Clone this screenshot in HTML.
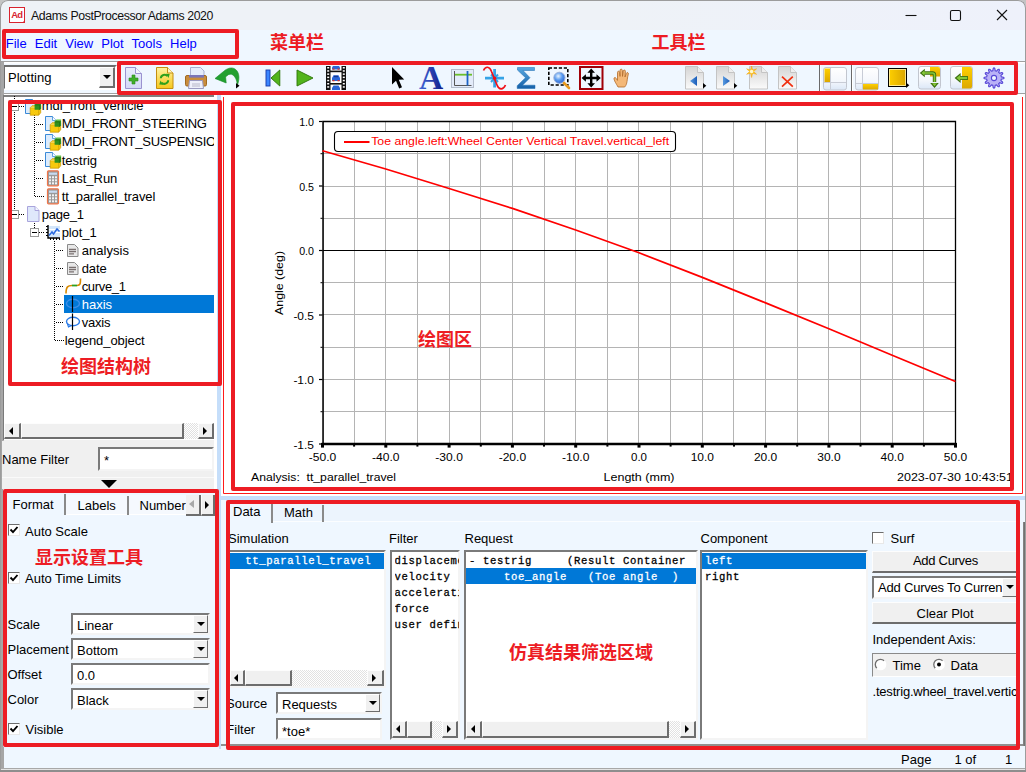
<!DOCTYPE html>
<html><head><meta charset="utf-8"><title>Adams PostProcessor Adams 2020</title>
<style>
*{box-sizing:border-box;margin:0;padding:0}
html,body{width:1026px;height:772px;overflow:hidden;background:#eff7ff}
body{position:relative;font-family:"Liberation Sans","Noto Sans CJK SC",sans-serif;font-size:13px;color:#000}
.a{position:absolute}
.t{position:absolute;white-space:pre;line-height:1}
.rb{position:absolute;border:4px solid #ed1c24;border-radius:2px}
.cn{position:absolute;white-space:pre;line-height:1;color:#ed1c24;font-weight:bold;font-size:18px;font-family:"Liberation Sans","Noto Sans CJK SC",sans-serif}
.sunk{position:absolute;background:#fff;border:2px solid;border-color:#7a7a7a #f4f4f4 #f4f4f4 #7a7a7a}
.btn{position:absolute;background:#f0f0f0;border:2px solid;border-color:#fdfdfd #6d6d6d #6d6d6d #fdfdfd}
.mono{font-family:"Liberation Mono",monospace;font-weight:normal;font-size:10.6px;letter-spacing:0.64px;-webkit-text-stroke:0.28px currentColor}
.dd{position:absolute;background:#f0f0f0;border:1px solid;border-color:#fff #6d6d6d #6d6d6d #fff}
.dd:after{content:"";position:absolute;left:50%;top:50%;margin:-2px 0 0 -4px;border:4px solid transparent;border-top:4px solid #000;border-bottom:0}
.sbl:after,.sbr:after{content:"";position:absolute;top:50%;left:50%;border:4px solid transparent}
.sbl:after{border-right:4px solid #000;border-left:0;margin:-4px 0 0 -3px}
.sbr:after{border-left:4px solid #000;border-right:0;margin:-4px 0 0 -3px}
.chk{position:absolute;width:12px;height:12px;background:#fff;border:1px solid;border-color:#6d6d6d #e8e8e8 #e8e8e8 #6d6d6d}
</style></head><body>
<!-- title bar -->
<div class="a" style="left:0;top:0;width:1026px;height:31px;background:linear-gradient(90deg,#eef2f7 60%,#eef1fb)"></div>
<div class="a" style="left:9px;top:7px;width:16px;height:16px;border:1px solid #d8232f;background:#fff"></div>
<div class="t" style="left:11.2px;top:10.4px;font-size:9.4px;font-weight:bold;color:#d8232f;letter-spacing:-0.8px">Ad</div>
<div class="t" id="ttl" style="left:31px;top:10px;font-size:12.3px;color:#111;letter-spacing:-0.38px">Adams PostProcessor Adams 2020</div>
<svg class="a" style="left:900px;top:5px" width="115" height="22" viewBox="0 0 115 22"><g fill="none" stroke="#111" stroke-width="1.1">
<path d="M5.5 10.5h11"/><rect x="50.5" y="5.5" width="10" height="10" rx="1.5"/><path d="M97 5l10 10M107 5l-10 10"/></g></svg>
<div class="a" style="left:22px;top:20px;width:0;height:0;border-left:3px solid transparent;border-bottom:3px solid #d8232f"></div>
<!-- menu bar -->
<div class="a" style="left:0;top:30px;width:1026px;height:30px;background:#eff7ff"></div>
<div class="t" id="menu" style="left:5.7px;top:37px;font-size:13px;color:#0000ff;word-spacing:4.5px">File Edit View Plot Tools Help</div>
<div class="a" style="left:0;top:61px;width:1026px;height:1px;background:#a0a0a0"></div>
<div class="a" style="left:0;top:62px;width:1026px;height:1px;background:#fff"></div><div class="a" style="left:0;top:63px;width:1026px;height:1px;background:#f8fbff"></div>
<!-- toolbar -->
<div class="a" style="left:2px;top:93px;width:220px;height:1px;background:#a0a0a0"></div><div class="a" style="left:2px;top:94px;width:220px;height:1px;background:#fff"></div>
<div class="sunk" style="left:3px;top:65px;width:114px;height:25px;border-color:#6d6d6d #fff #fff #6d6d6d"></div>
<div class="t" style="left:8px;top:71px;font-size:13px">Plotting</div>
<div class="dd" style="left:99px;top:67px;width:16px;height:21px;border-width:1px 2px 2px 1px"></div>
<svg class="a" style="left:0;top:56px" width="1026" height="44" viewBox="0 56 1026 44">
<defs>
<linearGradient id="gPg" x1="0" y1="0" x2="0" y2="1"><stop offset="0" stop-color="#d4d4d4"/><stop offset="1" stop-color="#fbfbfb"/></linearGradient>
<linearGradient id="gLv" x1="0" y1="0" x2="0" y2="1"><stop offset="0" stop-color="#e8eefc"/><stop offset="1" stop-color="#d4d8f6"/></linearGradient>
<linearGradient id="gYl" x1="0" y1="0" x2="0" y2="1"><stop offset="0" stop-color="#fff2a0"/><stop offset="1" stop-color="#f6c81c"/></linearGradient>
<linearGradient id="gYh" x1="0" y1="0" x2="1" y2="0"><stop offset="0" stop-color="#ffd000"/><stop offset="1" stop-color="#d8a400"/></linearGradient>
<linearGradient id="gYv" x1="0" y1="0" x2="0" y2="1"><stop offset="0" stop-color="#ffd000"/><stop offset="1" stop-color="#dca800"/></linearGradient>
<linearGradient id="gWh" x1="0" y1="0" x2="0" y2="1"><stop offset="0" stop-color="#ffffff"/><stop offset="0.6" stop-color="#f4f7fc"/><stop offset="1" stop-color="#dbe7f7"/></linearGradient>
<linearGradient id="gBl" x1="0" y1="0" x2="1" y2="0"><stop offset="0" stop-color="#5a9be0"/><stop offset="1" stop-color="#1b5cb8"/></linearGradient>
<linearGradient id="gSg" x1="0" y1="0" x2="0" y2="1"><stop offset="0" stop-color="#58a8e0"/><stop offset="1" stop-color="#1560a8"/></linearGradient>
<linearGradient id="gA" x1="0" y1="0" x2="1" y2="0"><stop offset="0" stop-color="#4468d8"/><stop offset="1" stop-color="#101c88"/></linearGradient>
<radialGradient id="gMg" cx="0.4" cy="0.35" r="0.7"><stop offset="0" stop-color="#e8f4ff"/><stop offset="0.5" stop-color="#5a9cf0"/><stop offset="1" stop-color="#2a60d0"/></radialGradient>
</defs>
<!-- 1 new page -->
<path d="M125.5 67.5h10l6 6v15h-16z" fill="url(#gLv)" stroke="#9a92d0"/><path d="M135.5 67.5v6h6" fill="#f4f6ff" stroke="#9a92d0"/>
<path d="M132 75h3v3h3v3h-3v3h-3v-3h-3v-3h3z" fill="#3fae2a" stroke="#2a8a18" stroke-width=".6"/>
<!-- 2 refresh -->
<path d="M156.5 67.5h11l5.500 5.500v15.500h-16.500z" fill="url(#gYl)" stroke="#c48e10"/><path d="M167.500 67.500v5.500h5.500" fill="#fff6c0" stroke="#c48e10"/>
<g fill="none" stroke="#2fa01c" stroke-width="2"><path d="M160.800 78.300a3.800 3.800 0 0 1 6.600-2.300"/><path d="M168.200 80.300a3.800 3.800 0 0 1-6.600 2.300"/></g>
<path d="M165.800 73.800l3.900 .3-1.200 3.900z" fill="#2fa01c"/><path d="M163.200 84.800l-3.900-.3 1.200-3.900z" fill="#2fa01c"/>
<!-- 3 printer -->
<path d="M190.500 67.500h10l3.500 3.500v6h-13.500z" fill="#e4ecfc" stroke="#a8b0d0"/>
<rect x="185.500" y="75.500" width="21" height="10.500" rx="1.500" fill="#c98d3c" stroke="#a06a20"/>
<rect x="189" y="75" width="15" height="2.600" fill="#7a74b8"/>
<path d="M189.500 80.500h13l1 8h-15z" fill="#eef0fa" stroke="#9a9ac0"/><path d="M192 84h8M192 86h8" stroke="#b8b8c8" stroke-width="1"/>
<!-- 4 undo -->
<path d="M215 78.500L223.500 71.500C227 68.300 231 67.200 234 68.500C238.600 70.500 240.600 77 237.300 85.500C237 80 235 75.600 231.500 74.300C229.500 73.700 227.500 74.800 225.600 77L226.200 83Z" fill="#23a030" stroke="#148a28" stroke-width=".6"/>
<path d="M236 83v5.500l3.500-2.750z" fill="#000"/>
<!-- 5 first -->
<rect x="266" y="70" width="4" height="16" fill="#3b86ff" stroke="#1638a8" stroke-width=".9"/>
<path d="M271 78l8.800-8v16z" fill="#52b41c" stroke="#2c7408" stroke-width=".9"/>
<!-- 6 play -->
<path d="M297 70l16 8-16 8z" fill="#52b41c" stroke="#2c7408" stroke-width=".9"/>
<!-- 7 film -->
<rect x="326" y="66" width="20" height="24" fill="#fff"/>
<rect x="326" y="66" width="4.500" height="24" fill="#111"/><rect x="341.500" y="66" width="4.500" height="24" fill="#111"/>
<g fill="#fff"><rect x="327.200" y="67" width="2" height="1.500"/><rect x="327.200" y="70.200" width="2" height="1.500"/><rect x="327.200" y="73.400" width="2" height="1.500"/><rect x="327.200" y="76.600" width="2" height="1.500"/><rect x="327.200" y="79.800" width="2" height="1.500"/><rect x="327.200" y="83" width="2" height="1.500"/><rect x="327.200" y="86.200" width="2" height="1.500"/>
<rect x="342.800" y="67" width="2" height="1.500"/><rect x="342.800" y="70.200" width="2" height="1.500"/><rect x="342.800" y="73.400" width="2" height="1.500"/><rect x="342.800" y="76.600" width="2" height="1.500"/><rect x="342.800" y="79.800" width="2" height="1.500"/><rect x="342.800" y="83" width="2" height="1.500"/><rect x="342.800" y="86.200" width="2" height="1.500"/></g>
<rect x="330" y="70.600" width="12" height="1.600" fill="#111"/><rect x="330" y="83" width="12" height="1.600" fill="#111"/>
<path d="M332 81v-3l1.500-2.800h5l1.500 2.800v3z" fill="#2a66d8"/><rect x="334" y="75.800" width="4" height="1.400" fill="#163a90"/><rect x="332.500" y="80" width="2" height="1.300" fill="#e03020"/><rect x="337.500" y="80" width="2" height="1.300" fill="#e03020"/>
<path d="M332 69.500v-2l1-1.500h6l1 1.500v2z" fill="#2a66d8"/><rect x="332.500" y="68.500" width="2" height="1.200" fill="#e03020"/><rect x="337.500" y="68.500" width="2" height="1.200" fill="#e03020"/>
<path d="M332 90v-2l1.500-2.600h5l1.500 2.600v2z" fill="#2a66d8"/>
<!-- 8 cursor -->
<path d="M392 67v17.500l4-3.700 3.200 7.700 2.800-1.200-3.200-7.500 5.400-.3z" fill="#000"/>
<!-- 9 A -->
<text x="431" y="89.400" font-family="Liberation Serif,serif" font-weight="bold" font-size="33.500" text-anchor="middle" fill="url(#gA)">A</text>
<!-- 10 chart -->
<rect x="451.500" y="69.500" width="22" height="18" fill="#e3ebfa" stroke="#b4bccb"/>
<path d="M454.500 71v14.500h17" fill="none" stroke="#555" stroke-width="1"/>
<path d="M455 74.700h17" stroke="#6cbf2a" stroke-width="1.800"/><path d="M467.500 71v14.500" stroke="#1b62c4" stroke-width="1.800"/>
<!-- 11 curve cross -->
<path d="M485 78.200h19M494.600 69v18.500" stroke="#36a3e6" stroke-width="2.800"/>
<path d="M491 74.500l7 7.500M498 74.500l-7 7.500" stroke="#36a3e6" stroke-width="2"/>
<path d="M483.500 70.500c2-4.500 6-4.500 8 1l5.500 13.500c2 5 6 5.500 8.500 0" fill="none" stroke="#f01018" stroke-width="1.700"/>
<circle cx="494.600" cy="78.200" r="1.700" fill="#f01018"/>
<!-- 12 sigma -->
<path d="M517.500 67.500h17v3h-11.500l7 7.200-7.500 7.500h12.500v3.300h-17.800v-2.800l8.300-8-8-7.600z" fill="url(#gSg)" stroke="#1a6ab0" stroke-width=".5"/>
<!-- 13 zoom box -->
<rect x="548.800" y="68" width="19" height="17" fill="none" stroke="#000" stroke-width="1.600" stroke-dasharray="3.200 1.800"/>
<path d="M563 82l6 6" stroke="#e89a20" stroke-width="2.600" stroke-linecap="round"/>
<circle cx="559.400" cy="77.800" r="5.600" fill="url(#gMg)" stroke="#9ab0d8" stroke-width="1"/>
<!-- 14 fit -->
<rect x="580" y="67" width="22.500" height="22" fill="none" stroke="#a00008" stroke-width="2"/>
<path d="M591.200 71v14M584 78h14.500" stroke="#000" stroke-width="2.400"/>
<path d="M591.200 68.400l3.800 4.300h-7.600zM591.200 87.600l3.800-4.300h-7.600zM581.600 78l4.300-3.800v7.600zM600.800 78l-4.300-3.800v7.600z" fill="#000"/>
<!-- 15 hand -->
<path d="M618 87c-1.500-3-3.500-5.500-4-8-.3-1.600 1.300-2 2.200-.6l1.300 2v-8c0-1.600 2-1.600 2.200 0l.3 4v-6c0-1.700 2.200-1.700 2.400 0l.1 6 .7-5.300c.3-1.600 2.300-1.300 2.200.3l-.4 5.600 1.300-3.600c.6-1.500 2.400-.9 2 .7-1 4-1 6.500-1.600 9-.4 1.800-1.200 2.900-2 3.900z" fill="#f4b878" stroke="#b06a28" stroke-width=".8"/>
<!-- 16 prev page -->
<path d="M685.500 66.500h12l6 6v16.500h-18z" fill="url(#gPg)" stroke="#c4c4c4"/><path d="M697.500 66.500v6h6" fill="#eee" stroke="#c4c4c4"/>
<path d="M690 81l7-5v10z" fill="url(#gBl)"/><path d="M703 83v5.500l3.300-2.750z" fill="#000"/>
<!-- 17 next page -->
<path d="M716.500 66.500h12l6 6v16.500h-18z" fill="url(#gPg)" stroke="#c4c4c4"/><path d="M728.500 66.500v6h6" fill="#eee" stroke="#c4c4c4"/>
<path d="M730 81l-7-5v10z" fill="url(#gBl)"/><path d="M734 83v5.500l3.300-2.750z" fill="#000"/>
<!-- 18 new page star -->
<path d="M749.500 66.500h12l6 6v16.500h-18z" fill="url(#gPg)" stroke="#c4c4c4"/><path d="M761.500 66.500v6h6" fill="#eee" stroke="#c4c4c4"/>
<path d="M751.600 66l1 4 4-1.200-3 2.800 3 2.700-4-1.100-1 4.300-1-4.300-4 1.100 3-2.700-3-2.800 4 1.200z" fill="#ffc820" stroke="#f0a010" stroke-width=".5"/><circle cx="751.600" cy="71.500" r="1.800" fill="#fff8d0"/>
<!-- 19 delete page -->
<path d="M778.500 66.500h12l6 6v16.500h-18z" fill="url(#gPg)" stroke="#c4c4c4"/><path d="M790.500 66.500v6h6" fill="#eee" stroke="#c4c4c4"/>
<path d="M782 76.600l10.800 10M792.800 76.600l-10.800 10" stroke="#f03010" stroke-width="1.700"/>
<!-- separators -->
<path d="M819.500 65v26M851.500 65v26" stroke="#6a6a6a" stroke-width="1"/><path d="M820.500 65v26M852.500 65v26" stroke="#fff" stroke-width="1"/>
<!-- 20 layout1 -->
<rect x="823.500" y="67.500" width="23" height="22.500" rx="2.500" fill="url(#gWh)" stroke="#c2c6cf"/>
<rect x="824.500" y="68.500" width="5.500" height="13.500" fill="url(#gYv)"/>
<path d="M824 82.500h22M830.500 68v21.500" stroke="#c8ccd6" stroke-width="1"/>
<!-- 21 layout2 -->
<rect x="855.500" y="67.500" width="23" height="22.500" rx="2.500" fill="url(#gWh)" stroke="#c2c6cf"/>
<rect x="863" y="84" width="15" height="5.500" fill="url(#gYv)"/>
<path d="M856 83.500h22M862.500 68v21.500" stroke="#c8ccd6" stroke-width="1"/>
<!-- 22 yellow square -->
<rect x="888.500" y="68.500" width="18" height="18" fill="url(#gYh)" stroke="#000"/><rect x="889.500" y="69.500" width="16" height="16" fill="none" stroke="#fff3b0" stroke-width=".8"/>
<path d="M906 82.500v5.500l3.300-2.750z" fill="#000"/>
<!-- 23 swap -->
<rect x="918.500" y="66.500" width="22" height="22.500" rx="2.500" fill="url(#gWh)" stroke="#c2c6cf"/>
<path d="M930 67h8a2 2 0 0 1 2 2v7.500h-10z" fill="url(#gYv)"/>
<path d="M924 73h8.500q2 0 2 2v7" fill="none" stroke="#3c6e10" stroke-width="3.400"/>
<path d="M919.800 73l5-4.300v8.600zM934.500 88l-4.300-5h8.600z" fill="#3c6e10"/>
<path d="M924 73h8.500q2 0 2 2v7" fill="none" stroke="#86c93a" stroke-width="1.600"/>
<path d="M921.500 73l3-2.500v5zM934.500 86.200l-2.500-3h5z" fill="#86c93a"/>
<!-- 24 left arrow -->
<rect x="950.500" y="66.500" width="22" height="22.500" rx="2.500" fill="url(#gWh)" stroke="#c2c6cf"/>
<path d="M962 67h8a2 2 0 0 1 2 2v17.500a2 2 0 0 1-2 2h-8z" fill="url(#gYv)"/>
<path d="M960 78h8" stroke="#3c6e10" stroke-width="3.800"/><path d="M954.600 78l6-5v10z" fill="#3c6e10"/>
<path d="M960 78h7.200" stroke="#86c93a" stroke-width="2"/><path d="M956.400 78l3.800-3.100v6.200z" fill="#86c93a"/>
<!-- 25 gear -->
<g transform="translate(994 78)" fill="#b9b2f7" stroke="#5546d6" stroke-width="1.100">
<path fill-rule="evenodd" d="M7.31 -1.16L9.36 -0.84Q10.80 0.00 9.36 0.84L7.31 1.16L6.91 2.65L8.53 3.96Q9.35 5.40 7.69 5.41L5.75 4.66L4.66 5.75L5.41 7.69Q5.40 9.35 3.96 8.53L2.65 6.91L1.16 7.31L0.84 9.36Q0.00 10.80 -0.84 9.36L-1.16 7.31L-2.65 6.91L-3.96 8.53Q-5.40 9.35 -5.41 7.69L-4.66 5.75L-5.75 4.66L-7.69 5.41Q-9.35 5.40 -8.53 3.96L-6.91 2.65L-7.31 1.16L-9.36 0.84Q-10.80 0.00 -9.36 -0.84L-7.31 -1.16L-6.91 -2.65L-8.53 -3.96Q-9.35 -5.40 -7.69 -5.41L-5.75 -4.66L-4.66 -5.75L-5.41 -7.69Q-5.40 -9.35 -3.96 -8.53L-2.65 -6.91L-1.16 -7.31L-0.84 -9.36Q-0.00 -10.80 0.84 -9.36L1.16 -7.31L2.65 -6.91L3.96 -8.53Q5.40 -9.35 5.41 -7.69L4.66 -5.75L5.75 -4.66L7.69 -5.41Q9.35 -5.40 8.53 -3.96L6.91 -2.65ZM2.6 0A2.6 2.6 0 1 0 -2.6 0A2.6 2.6 0 1 0 2.6 0Z"/>
</g>
</svg>
<!-- left edge strip -->
<div class="a" style="left:0;top:62px;width:4px;height:710px;background:#a6a6a6"></div>
<div class="a" style="left:0;top:74px;width:1px;height:14px;background:#5a3aa0"></div>
<div class="a" style="left:0;top:130px;width:1px;height:30px;background:#6a8ac8"></div>
<div class="a" style="left:0;top:228px;width:1px;height:26px;background:#5a3ad0"></div>
<div class="a" style="left:0;top:330px;width:1px;height:60px;background:#303030"></div>
<!-- tree view -->
<div class="a" style="left:3px;top:95px;width:212px;height:346px;background:#fff;border:1px solid;border-top-width:2px;border-color:#808080 #fff #f0f0f0 #7a7a7a"></div>
<svg class="a" style="left:4px;top:96px" width="210" height="327" viewBox="4 96 210 327">
<g stroke="#000" stroke-width="1" stroke-dasharray="1 1" fill="none">
<path d="M14.5 96V214"/>
<path d="M19 106.500H24"/>
<path d="M34.500 111V196.500H44"/>
<path d="M36 124.5H44"/>
<path d="M36 142.5H44"/>
<path d="M36 160.5H44"/>
<path d="M36 178.5H44"/>
<path d="M19 214.500H24"/>
<path d="M34.500 223V228"/>
<path d="M39 232.500H44"/>
<path d="M54.500 241V340.500H64"/>
<path d="M56 250.5H64"/>
<path d="M56 268.5H64"/>
<path d="M56 286.5H64"/>
<path d="M56 304.5H64"/>
<path d="M56 322.5H64"/>
</g>
<rect x="10.5" y="102.5" width="8" height="8" fill="#fff" stroke="#9a9a9a"/><path d="M12.0 106.5h5" stroke="#000"/>
<rect x="10.5" y="210.5" width="8" height="8" fill="#fff" stroke="#9a9a9a"/><path d="M12.0 214.5h5" stroke="#000"/>
<rect x="30.5" y="228.5" width="8" height="8" fill="#fff" stroke="#9a9a9a"/><path d="M32.0 232.5h5" stroke="#000"/>
<path d="M25.5 99.5h7l4 4v10h-11z" fill="#dcecfd" stroke="#3b8ad8"/><path d="M32.5 99.5v4h4" fill="#f6faff" stroke="#3b8ad8" stroke-width=".8"/><path d="M30.2 107.7l2-2h8.500v7l-2 2.500h-8.500z" fill="#f7c90e" stroke="#c79500" stroke-width=".7"/><path d="M30.2 107.7h8.500v7.500" fill="none" stroke="#c79500" stroke-width=".6"/><path d="M30.6 107.2h8.300l1.800-1.800" fill="none" stroke="#ffe680" stroke-width=".9"/><path d="M34.6 104.7l1.500-1.500h5v5l-1.500 1.500h-5z" fill="#2f8f1e"/><path d="M34.6 104.9h5v5" fill="none" stroke="#1d6a12" stroke-width=".7"/><path d="M35.0 104.2l1.300-1.300h4.800" fill="none" stroke="#6fcf4a" stroke-width=".9"/>
<path d="M45.5 116.5h7l4 4v10h-11z" fill="#dcecfd" stroke="#3b8ad8"/><path d="M52.5 116.5v4h4" fill="#f6faff" stroke="#3b8ad8" stroke-width=".8"/><path d="M50.2 124.7l2-2h8.500v7l-2 2.500h-8.500z" fill="#f7c90e" stroke="#c79500" stroke-width=".7"/><path d="M50.2 124.7h8.500v7.500" fill="none" stroke="#c79500" stroke-width=".6"/><path d="M50.6 124.2h8.300l1.800-1.800" fill="none" stroke="#ffe680" stroke-width=".9"/><path d="M54.6 121.7l1.500-1.500h5v5l-1.500 1.500h-5z" fill="#2f8f1e"/><path d="M54.6 121.9h5v5" fill="none" stroke="#1d6a12" stroke-width=".7"/><path d="M55.0 121.2l1.300-1.300h4.800" fill="none" stroke="#6fcf4a" stroke-width=".9"/>
<path d="M45.5 134.5h7l4 4v10h-11z" fill="#dcecfd" stroke="#3b8ad8"/><path d="M52.5 134.5v4h4" fill="#f6faff" stroke="#3b8ad8" stroke-width=".8"/><path d="M50.2 142.7l2-2h8.500v7l-2 2.500h-8.500z" fill="#f7c90e" stroke="#c79500" stroke-width=".7"/><path d="M50.2 142.7h8.500v7.500" fill="none" stroke="#c79500" stroke-width=".6"/><path d="M50.6 142.2h8.300l1.800-1.800" fill="none" stroke="#ffe680" stroke-width=".9"/><path d="M54.6 139.7l1.500-1.500h5v5l-1.500 1.500h-5z" fill="#2f8f1e"/><path d="M54.6 139.9h5v5" fill="none" stroke="#1d6a12" stroke-width=".7"/><path d="M55.0 139.2l1.300-1.300h4.800" fill="none" stroke="#6fcf4a" stroke-width=".9"/>
<path d="M45.5 152.5h7l4 4v10h-11z" fill="#dcecfd" stroke="#3b8ad8"/><path d="M52.5 152.5v4h4" fill="#f6faff" stroke="#3b8ad8" stroke-width=".8"/><path d="M50.2 160.7l2-2h8.500v7l-2 2.500h-8.500z" fill="#f7c90e" stroke="#c79500" stroke-width=".7"/><path d="M50.2 160.7h8.500v7.500" fill="none" stroke="#c79500" stroke-width=".6"/><path d="M50.6 160.2h8.300l1.800-1.800" fill="none" stroke="#ffe680" stroke-width=".9"/><path d="M54.6 157.7l1.500-1.500h5v5l-1.500 1.500h-5z" fill="#2f8f1e"/><path d="M54.6 157.9h5v5" fill="none" stroke="#1d6a12" stroke-width=".7"/><path d="M55.0 157.2l1.300-1.300h4.800" fill="none" stroke="#6fcf4a" stroke-width=".9"/>
<rect x="47.5" y="170.8" width="11" height="15" rx="1" fill="#9a9a9a" stroke="#f0764a" stroke-width="1.2"/><rect x="49.0" y="172.6" width="8" height="2.200" fill="#c8daf0"/><rect x="49.0" y="176.3" width="2" height="2" fill="#f4f4f4"/><rect x="52.0" y="176.3" width="2" height="2" fill="#f4f4f4"/><rect x="55.0" y="176.3" width="2" height="2" fill="#f4f4f4"/><rect x="49.0" y="179.3" width="2" height="2" fill="#f4f4f4"/><rect x="52.0" y="179.3" width="2" height="2" fill="#f4f4f4"/><rect x="55.0" y="179.3" width="2" height="2" fill="#f4f4f4"/><rect x="49.0" y="182.3" width="2" height="2" fill="#f4f4f4"/><rect x="52.0" y="182.3" width="2" height="2" fill="#f4f4f4"/><rect x="55.0" y="182.3" width="2" height="2" fill="#f4f4f4"/>
<rect x="47.5" y="188.8" width="11" height="15" rx="1" fill="#9a9a9a" stroke="#f0764a" stroke-width="1.2"/><rect x="49.0" y="190.6" width="8" height="2.200" fill="#c8daf0"/><rect x="49.0" y="194.3" width="2" height="2" fill="#f4f4f4"/><rect x="52.0" y="194.3" width="2" height="2" fill="#f4f4f4"/><rect x="55.0" y="194.3" width="2" height="2" fill="#f4f4f4"/><rect x="49.0" y="197.3" width="2" height="2" fill="#f4f4f4"/><rect x="52.0" y="197.3" width="2" height="2" fill="#f4f4f4"/><rect x="55.0" y="197.3" width="2" height="2" fill="#f4f4f4"/><rect x="49.0" y="200.3" width="2" height="2" fill="#f4f4f4"/><rect x="52.0" y="200.3" width="2" height="2" fill="#f4f4f4"/><rect x="55.0" y="200.3" width="2" height="2" fill="#f4f4f4"/>
<path d="M27.500 206.500h7.500l4 4v11h-11.500z" fill="#dfe8fb" stroke="#a9a4dc"/><path d="M35 206.500v4h4" fill="#f4f6ff" stroke="#a9a4dc"/>
<rect x="48" y="226" width="12" height="11" fill="#d4e6fa"/><path d="M48 229.500h12M48 232.500h12" stroke="#fff" stroke-width="1"/>
<path d="M48 225V238H60" fill="none" stroke="#000" stroke-width="1.400"/><path d="M46 226.500h2M46 229.500h2M46 232.500h2M46 235.500h2M50.500 238v2M53.500 238v2M56.500 238v2M59.500 238v2" stroke="#000" stroke-width="1"/>
<path d="M49 235.500l3-3.500 1.500 2 3.500-5 2.500 2.500" fill="none" stroke="#2a6ae0" stroke-width="1.500"/>
<path d="M67.5 244.5h7l3.500 3.500v8.500h-10.500z" fill="#e8e8e8" stroke="#8a8a8a"/><path d="M69.0 249.5h7M69.0 251.7h7M69.0 253.9h5" stroke="#7a7070" stroke-width="1.300"/>
<path d="M67.5 262.5h7l3.500 3.500v8.500h-10.500z" fill="#e8e8e8" stroke="#8a8a8a"/><path d="M69.0 267.5h7M69.0 269.7h7M69.0 271.9h5" stroke="#7a7070" stroke-width="1.300"/>
<path d="M66 293.500c0-7 2-8 6-8" fill="none" stroke="#d88a00" stroke-width="1.600"/><path d="M72 285.500h5" stroke="#2fa01c" stroke-width="1.800"/><path d="M77 285.500c3.500 0 3.500-2 3.500-7" fill="none" stroke="#d88a00" stroke-width="1.600"/>
</svg>
<div class="a" style="left:64px;top:295px;width:150px;height:18px;background:#0078d7"></div>
<svg class="a" style="left:64px;top:295px" width="20" height="36" viewBox="64 295 20 36">
<ellipse cx="73" cy="303.500" rx="6.500" ry="4.300" fill="none" stroke="#3d8ee8" stroke-width="1.400"/><path d="M72.500 296v16" stroke="#000" stroke-width="1.200"/>
<ellipse cx="73" cy="321.500" rx="6.500" ry="4.300" fill="none" stroke="#2a7be8" stroke-width="1.400"/><path d="M67.500 324l1 3 3-1.500" fill="none" stroke="#2a7be8" stroke-width="1.200"/><path d="M72.500 313.500v16.500" stroke="#000" stroke-width="1.200"/>
</svg>
<div class="a" style="left:4px;top:96px;width:210px;height:327px;overflow:hidden">
<div class="t" style="left:37.7px;top:3.2px;font-size:13px;letter-spacing:0px;color:#000">mdi_front_vehicle</div>
<div class="t" style="left:57.7px;top:21.3px;font-size:13px;letter-spacing:-0.25px;color:#000">MDI_FRONT_STEERING</div>
<div class="t" style="left:57.7px;top:39.4px;font-size:13px;letter-spacing:-0.25px;color:#000">MDI_FRONT_SUSPENSION</div>
<div class="t" style="left:57.7px;top:57.5px;font-size:13px;letter-spacing:0px;color:#000">testrig</div>
<div class="t" style="left:57.7px;top:75.6px;font-size:13px;letter-spacing:0px;color:#000">Last_Run</div>
<div class="t" style="left:57.7px;top:93.6px;font-size:13px;letter-spacing:-0.1px;color:#000">tt_parallel_travel</div>
<div class="t" style="left:37.7px;top:111.7px;font-size:13px;letter-spacing:-0.2px;color:#000">page_1</div>
<div class="t" style="left:57.7px;top:129.7px;font-size:13px;letter-spacing:-0.1px;color:#000">plot_1</div>
<div class="t" style="left:77.7px;top:147.7px;font-size:13px;letter-spacing:0.05px;color:#000">analysis</div>
<div class="t" style="left:77.7px;top:165.7px;font-size:13px;letter-spacing:-0.05px;color:#000">date</div>
<div class="t" style="left:77.7px;top:183.7px;font-size:13px;letter-spacing:-0.33px;color:#000">curve_1</div>
<div class="t" style="left:77.7px;top:201.7px;font-size:13px;letter-spacing:0px;color:#fff">haxis</div>
<div class="t" style="left:77.7px;top:219.7px;font-size:13px;letter-spacing:-0.2px;color:#000">vaxis</div>
<div class="t" style="left:60.7px;top:237.7px;font-size:13px;letter-spacing:-0.08px;color:#000">legend_object</div>
</div>
<div class="a" style="left:4px;top:423px;width:210px;height:16px;background:#f0f0f0"></div>
<div class="a" style="left:184px;top:423px;width:14px;height:16px;background:#e6e6e6;background-image:repeating-conic-gradient(#fff 0 25%,#e0e0e0 0 50%);background-size:2px 2px"></div>
<div class="btn sbl" style="left:4px;top:423px;width:17px;height:16px;border-width:1px 2px 2px 1px"></div>
<div class="btn" style="left:21px;top:423px;width:163px;height:16px;border-width:1px 2px 2px 1px"></div>
<div class="btn sbr" style="left:198px;top:423px;width:16px;height:16px;border-width:1px 2px 2px 1px"></div>
<div class="a" style="left:2px;top:441px;width:214px;height:48px;background:#f0f0f0;border-right:2px solid #8a8a8a"></div>
<div class="t" style="left:2px;top:452.5px;font-size:13px">Name Filter</div>
<div class="sunk" style="left:98px;top:447px;width:116px;height:24px"></div>
<div class="t" style="left:104px;top:454px;font-size:13px">*</div>
<div class="a" style="left:2px;top:477px;width:212px;height:1px;background:#fafafa"></div>
<div class="a" style="left:101px;top:480px;width:0;height:0;border-left:8px solid transparent;border-right:8px solid transparent;border-top:8px solid #000"></div>
<div class="a" style="left:3px;top:489px;width:216px;height:258px;background:#eff7ff"></div>
<div class="a" style="left:66px;top:495px;width:120px;height:20px;background:#f5f9fe;border-bottom:1px solid #fff"></div>
<div class="a" style="left:64px;top:494px;width:2px;height:21px;background:#8a8a8a"></div>
<div class="a" style="left:127px;top:496px;width:2px;height:19px;background:#8a8a8a"></div>
<div class="t" style="left:12.5px;top:497.6px;font-size:13px">Format</div>
<div class="t" style="left:77.5px;top:498.6px;font-size:13px">Labels</div>
<div class="t" style="left:139.5px;top:498.6px;font-size:13px">Number</div>
<div class="btn" style="left:186px;top:495px;width:15px;height:21px;border-width:0 2px 2px 0"><div class="a" style="left:3px;top:5px;border:4px solid transparent;border-right:5px solid #a8a8a8;border-left:0"></div></div>
<div class="btn sbr" style="left:201px;top:495px;width:14px;height:21px;border-width:0 2px 2px 1px"></div>
<div class="chk" style="left:8px;top:524px"><svg width="10" height="10" viewBox="0 0 10 10" style="position:absolute;left:0;top:0"><path d="M1.500 4.500l2.500 2.700 4.500-5.200" fill="none" stroke="#000" stroke-width="1.900"/></svg></div>
<div class="chk" style="left:8px;top:572px"><svg width="10" height="10" viewBox="0 0 10 10" style="position:absolute;left:0;top:0"><path d="M1.500 4.500l2.500 2.700 4.500-5.200" fill="none" stroke="#000" stroke-width="1.900"/></svg></div>
<div class="chk" style="left:8px;top:723px"><svg width="10" height="10" viewBox="0 0 10 10" style="position:absolute;left:0;top:0"><path d="M1.500 4.500l2.500 2.700 4.500-5.200" fill="none" stroke="#000" stroke-width="1.900"/></svg></div>
<div class="t" style="left:25px;top:524.6px;font-size:13px">Auto Scale</div>
<div class="t" style="left:25px;top:571.6px;font-size:13px">Auto Time Limits</div>
<div class="t" style="left:25.5px;top:722.6px;font-size:13px">Visible</div>
<div class="t" style="left:7.5px;top:617.6px;font-size:13px">Scale</div>
<div class="sunk" style="left:71px;top:613px;width:139px;height:22px"></div>
<div class="t" style="left:77px;top:618.6px;font-size:13px">Linear</div>
<div class="dd" style="left:193px;top:615px;width:15px;height:18px"></div>
<div class="t" style="left:7.5px;top:642.6px;font-size:13px">Placement</div>
<div class="sunk" style="left:71px;top:638px;width:139px;height:22px"></div>
<div class="t" style="left:77px;top:643.6px;font-size:13px">Bottom</div>
<div class="dd" style="left:193px;top:640px;width:15px;height:18px"></div>
<div class="t" style="left:7.5px;top:667.6px;font-size:13px">Offset</div>
<div class="sunk" style="left:71px;top:663px;width:139px;height:22px"></div>
<div class="t" style="left:77px;top:668.6px;font-size:13px">0.0</div>
<div class="t" style="left:7.5px;top:692.6px;font-size:13px">Color</div>
<div class="sunk" style="left:71px;top:688px;width:139px;height:22px"></div>
<div class="t" style="left:77px;top:693.6px;font-size:13px">Black</div>
<div class="dd" style="left:193px;top:690px;width:15px;height:18px"></div>
<!-- plot area -->
<div class="a" style="left:221px;top:93px;width:804px;height:1px;background:#a0a0a0"></div>
<div class="a" style="left:221px;top:94px;width:804px;height:402px;background:#fff"></div>
<div class="a" style="left:214px;top:94px;width:3px;height:396px;background:#fff"></div>
<div class="a" style="left:217px;top:94px;width:4px;height:406px;background:#c5defa"></div>
<div class="a" style="left:221px;top:496px;width:805px;height:4px;background:#c5defa"></div>
<svg class="a" style="left:221px;top:95px" width="805" height="400" viewBox="221 95 805 400" font-family="Liberation Sans,sans-serif" font-size="10.4">
<path d="M223.500 97V493.500H1022.500V97" fill="none" stroke="#ff1a1a" stroke-width="1"/>
<path d="M354.5 121.5V444.0M385.5 121.5V444.0M417.5 121.5V444.0M449.5 121.5V444.0M480.5 121.5V444.0M512.5 121.5V444.0M544.5 121.5V444.0M575.5 121.5V444.0M607.5 121.5V444.0M638.5 121.5V444.0M670.5 121.5V444.0M702.5 121.5V444.0M733.5 121.5V444.0M765.5 121.5V444.0M797.5 121.5V444.0M828.5 121.5V444.0M860.5 121.5V444.0M892.5 121.5V444.0M923.5 121.5V444.0M322.5 153.5H955.5M322.5 186.5H955.5M322.5 218.5H955.5M322.5 282.5H955.5M322.5 314.5H955.5M322.5 347.5H955.5M322.5 379.5H955.5M322.5 411.5H955.5" stroke="#b4b4b4" stroke-width="1" fill="none"/>
<path d="M322.5 250.5H955.5" stroke="#000" stroke-width="1.2"/>
<path d="M323 444V121.500H955.500V444" fill="none" stroke="#000" stroke-width="1.3"/><path d="M323.200 121V444" stroke="#000" stroke-width="0.800"/>
<path d="M321.500 444H956.500" stroke="#000" stroke-width="2.600"/>
<g fill="#000"><rect x="321.0" y="443" width="3" height="4.6"/><rect x="353.1" y="444" width="2" height="2.6"/><rect x="384.3" y="443" width="3" height="4.6"/><rect x="416.4" y="444" width="2" height="2.6"/><rect x="447.6" y="443" width="3" height="4.6"/><rect x="479.8" y="444" width="2" height="2.6"/><rect x="510.9" y="443" width="3" height="4.6"/><rect x="543.0" y="444" width="2" height="2.6"/><rect x="574.2" y="443" width="3" height="4.6"/><rect x="606.4" y="444" width="2" height="2.6"/><rect x="637.5" y="443" width="3" height="4.6"/><rect x="669.6" y="444" width="2" height="2.6"/><rect x="700.8" y="443" width="3" height="4.6"/><rect x="733.0" y="444" width="2" height="2.6"/><rect x="764.1" y="443" width="3" height="4.6"/><rect x="796.2" y="444" width="2" height="2.6"/><rect x="827.4" y="443" width="3" height="4.6"/><rect x="859.5" y="444" width="2" height="2.6"/><rect x="890.7" y="443" width="3" height="4.6"/><rect x="922.9" y="444" width="2" height="2.6"/><rect x="954.0" y="443" width="3" height="4.6"/><rect x="319" y="120.9" width="3.5" height="1.2"/><rect x="320.5" y="153.2" width="2" height="1"/><rect x="319" y="185.4" width="3.5" height="1.2"/><rect x="320.5" y="217.8" width="2" height="1"/><rect x="319" y="249.9" width="3.5" height="1.2"/><rect x="320.5" y="282.2" width="2" height="1"/><rect x="319" y="314.4" width="3.5" height="1.2"/><rect x="320.5" y="346.8" width="2" height="1"/><rect x="319" y="378.9" width="3.5" height="1.2"/><rect x="320.5" y="411.2" width="2" height="1"/><rect x="319" y="443.4" width="3.5" height="1.2"/></g>
<text x="314" y="126.2" text-anchor="end" textLength="14.8" lengthAdjust="spacingAndGlyphs">1.0</text>
<text x="314" y="190.7" text-anchor="end" textLength="14.8" lengthAdjust="spacingAndGlyphs">0.5</text>
<text x="314" y="255.2" text-anchor="end" textLength="14.8" lengthAdjust="spacingAndGlyphs">0.0</text>
<text x="314" y="319.7" text-anchor="end" textLength="20.6" lengthAdjust="spacingAndGlyphs">-0.5</text>
<text x="314" y="384.2" text-anchor="end" textLength="20.6" lengthAdjust="spacingAndGlyphs">-1.0</text>
<text x="314" y="448.7" text-anchor="end" textLength="20.6" lengthAdjust="spacingAndGlyphs">-1.5</text>
<text x="322.5" y="460.8" text-anchor="middle" textLength="27.5" lengthAdjust="spacingAndGlyphs">-50.0</text>
<text x="385.8" y="460.8" text-anchor="middle" textLength="27.5" lengthAdjust="spacingAndGlyphs">-40.0</text>
<text x="449.1" y="460.8" text-anchor="middle" textLength="27.5" lengthAdjust="spacingAndGlyphs">-30.0</text>
<text x="512.4" y="460.8" text-anchor="middle" textLength="27.5" lengthAdjust="spacingAndGlyphs">-20.0</text>
<text x="575.7" y="460.8" text-anchor="middle" textLength="27.5" lengthAdjust="spacingAndGlyphs">-10.0</text>
<text x="639.0" y="460.8" text-anchor="middle" textLength="16.0" lengthAdjust="spacingAndGlyphs">0.0</text>
<text x="702.3" y="460.8" text-anchor="middle" textLength="23.3" lengthAdjust="spacingAndGlyphs">10.0</text>
<text x="765.6" y="460.8" text-anchor="middle" textLength="23.3" lengthAdjust="spacingAndGlyphs">20.0</text>
<text x="828.9" y="460.8" text-anchor="middle" textLength="23.3" lengthAdjust="spacingAndGlyphs">30.0</text>
<text x="892.2" y="460.8" text-anchor="middle" textLength="23.3" lengthAdjust="spacingAndGlyphs">40.0</text>
<text x="955.5" y="460.8" text-anchor="middle" textLength="23.3" lengthAdjust="spacingAndGlyphs">50.0</text>
<text x="251" y="480.8" textLength="145" lengthAdjust="spacingAndGlyphs" xml:space="preserve">Analysis:  tt_parallel_travel</text>
<text x="639" y="480.8" text-anchor="middle" textLength="71" lengthAdjust="spacingAndGlyphs">Length (mm)</text>
<text x="897" y="480.8" textLength="116" lengthAdjust="spacingAndGlyphs">2023-07-30 10:43:51</text>
<text transform="translate(283 283) rotate(-90)" text-anchor="middle" textLength="64" lengthAdjust="spacingAndGlyphs">Angle (deg)</text>
<polyline points="322.5,150.8 385.8,169.0 449.1,188.5 512.4,208.4 575.7,230.0 639.0,252.8 702.3,277.4 765.6,302.9 828.9,328.7 892.2,355.2 955.5,381.5" fill="none" stroke="#ff0000" stroke-width="1.700"/>
<rect x="334.5" y="131.5" width="341" height="20" rx="3.5" fill="#fff" stroke="#000" stroke-width="1.1"/>
<path d="M344 142H369.5" stroke="#ff0000" stroke-width="2"/>
<text x="371.2" y="144.6" fill="#ff0000" textLength="298" lengthAdjust="spacingAndGlyphs">Toe angle.left:Wheel Center Vertical Travel.vertical_left</text>
</svg>
<!-- bottom panel -->
<div class="a" style="left:219px;top:489px;width:2px;height:260px;background:#c5defa"></div>
<div class="a" style="left:272px;top:504px;width:744px;height:18px;background:#ecf4fd;border-bottom:1px solid #fbfdff"></div>
<div class="a" style="left:271px;top:504px;width:2px;height:19px;background:#8a8a8a"></div>
<div class="a" style="left:322px;top:505px;width:2px;height:17px;background:#8a8a8a"></div>
<div class="t" style="left:233px;top:505.3px;font-size:13px">Data</div>
<div class="t" style="left:284px;top:506.3px;font-size:13px">Math</div>
<div class="t" style="left:228.0px;top:531.6px;font-size:13px">Simulation</div>
<div class="t" style="left:389.0px;top:531.6px;font-size:13px">Filter</div>
<div class="t" style="left:464.5px;top:531.6px;font-size:13px">Request</div>
<div class="t" style="left:700.5px;top:531.6px;font-size:13px">Component</div>
<div class="sunk" style="left:228px;top:550px;width:158px;height:138px;border-width:2px"></div>
<div class="a" style="left:230px;top:553px;width:154px;height:16px;background:#0078d7"></div>
<div class="t mono" style="left:245.3px;top:555.7px;color:#fff">tt_parallel_travel</div>
<div class="a" style="left:230px;top:670px;width:154px;height:16px;background:#e6e6e6;background-image:repeating-conic-gradient(#fff 0 25%,#e2e2e2 0 50%);background-size:2px 2px"></div>
<div class="btn sbl" style="left:230px;top:670px;width:15px;height:16px;border-width:1px 2px 2px 1px"></div>
<div class="btn" style="left:245px;top:670px;width:47px;height:16px;border-width:1px 2px 2px 1px"></div>
<div class="btn sbr" style="left:367px;top:670px;width:17px;height:16px;border-width:1px 2px 2px 1px"></div>
<div class="t" style="left:226px;top:696.9px;font-size:13px">Source</div>
<div class="t" style="left:226.3px;top:722.6px;font-size:13px">Filter</div>
<div class="sunk" style="left:276px;top:692px;width:106px;height:22px"></div>
<div class="t" style="left:282px;top:697.6px;font-size:13px">Requests</div>
<div class="dd" style="left:365px;top:694px;width:15px;height:18px"></div>
<div class="sunk" style="left:276px;top:718px;width:106px;height:22px"></div>
<div class="t" style="left:282px;top:724.6px;font-size:13px">*toe*</div>
<div class="sunk" style="left:390px;top:550px;width:70px;height:190px;border-width:2px;overflow:hidden"></div>
<div class="a mono" style="left:394.5px;top:553.7px;width:64.3px;height:100px;overflow:hidden">
<div class="t" style="left:0;top:2px">displacement</div>
<div class="t" style="left:0;top:18px">velocity</div>
<div class="t" style="left:0;top:34px">acceleration</div>
<div class="t" style="left:0;top:50px">force</div>
<div class="t" style="left:0;top:66px">user defined</div>
</div>
<div class="a" style="left:392px;top:721px;width:66px;height:17px;background:#e6e6e6;background-image:repeating-conic-gradient(#fff 0 25%,#e2e2e2 0 50%);background-size:2px 2px"></div>
<div class="btn sbl" style="left:392px;top:721px;width:15px;height:17px;border-width:1px 2px 2px 1px"></div>
<div class="btn" style="left:407px;top:721px;width:25px;height:17px;border-width:1px 2px 2px 1px"></div>
<div class="btn sbr" style="left:442px;top:721px;width:16px;height:17px;border-width:1px 2px 2px 1px"></div>
<div class="sunk" style="left:464px;top:550px;width:234px;height:190px;border-width:2px"></div>
<div class="a" style="left:466px;top:568px;width:230px;height:16px;background:#0078d7"></div>
<div class="a mono" style="left:469px;top:553.7px;width:227px;height:40px;overflow:hidden">
<div class="t" style="left:0;top:2px">- testrig     (Result Container</div>
<div class="t" style="left:0;top:18px;color:#fff">     toe_angle   (Toe angle  )</div>
</div>
<div class="a" style="left:466px;top:721px;width:230px;height:17px;background:#e6e6e6;background-image:repeating-conic-gradient(#fff 0 25%,#e2e2e2 0 50%);background-size:2px 2px"></div>
<div class="btn sbl" style="left:466px;top:721px;width:16px;height:17px;border-width:1px 2px 2px 1px"></div>
<div class="btn" style="left:482px;top:721px;width:187px;height:17px;border-width:1px 2px 2px 1px"></div>
<div class="btn sbr" style="left:680px;top:721px;width:16px;height:17px;border-width:1px 2px 2px 1px"></div>
<div class="sunk" style="left:700px;top:550px;width:168px;height:190px;border-width:2px"></div>
<div class="a" style="left:702px;top:553px;width:164px;height:16px;background:#0078d7"></div>
<div class="t mono" style="left:705px;top:555.7px;color:#fff">left</div>
<div class="t mono" style="left:705px;top:571.7px">right</div>
<div class="a" style="left:872px;top:504px;width:144px;height:242px;overflow:hidden">
<div class="chk" style="left:0px;top:28px"></div>
<div class="t" style="left:18.5px;top:27.800px;font-size:13px">Surf</div>
<div class="btn" style="left:0;top:46.500px;width:150px;height:22px;border-width:1px 2px 2px 1px"></div>
<div class="t" style="left:41px;top:50.200px;font-size:13px;letter-spacing:-0.3px">Add Curves</div>
<div class="sunk" style="left:0;top:71.500px;width:150px;height:23px"></div>
<div class="t" style="left:6px;top:77.100px;font-size:13px;letter-spacing:-0.2px">Add Curves To Current Plot</div>
<div class="dd" style="left:130px;top:73.500px;width:15px;height:19px"></div>
<div class="btn" style="left:0;top:98px;width:150px;height:22px;border-width:1px 2px 2px 1px"></div>
<div class="t" style="left:44.500px;top:102.600px;font-size:13px">Clear Plot</div>
<div class="t" style="left:0.500px;top:128.600px;font-size:13px">Independent Axis:</div>
<div class="a" style="left:0;top:148.500px;width:150px;height:24px;background:#f0f0f0;border:1px solid;border-color:#8a8a8a #fff #fff #8a8a8a"></div>
<svg class="a" style="left:0;top:148px" width="144" height="26" viewBox="0 0 144 26"><circle cx="8.5" cy="12.5" r="5.2" fill="#fff"/><path d="M4.82 16.18A5.2 5.2 0 0 1 12.18 8.82" fill="none" stroke="#6e6e6e" stroke-width="1.3"/><path d="M12.18 8.82A5.2 5.2 0 0 1 4.82 16.18" fill="none" stroke="#fff" stroke-width="1.3"/><circle cx="67" cy="12.5" r="5.2" fill="#fff"/><path d="M63.32 16.18A5.2 5.2 0 0 1 70.68 8.82" fill="none" stroke="#6e6e6e" stroke-width="1.3"/><path d="M70.68 8.82A5.2 5.2 0 0 1 63.32 16.18" fill="none" stroke="#fff" stroke-width="1.3"/><circle cx="67" cy="12.5" r="2" fill="#000"/></svg>
<div class="t" style="left:20.500px;top:154.600px;font-size:13px">Time</div>
<div class="t" style="left:78.500px;top:154.600px;font-size:13px">Data</div>
<div class="t" style="left:0.500px;top:180.600px;font-size:13px;letter-spacing:-0.2px">.testrig.wheel_travel.vertical_left</div>
</div>
<div class="a" style="left:4px;top:750px;width:1021px;height:18px;background:#eff7ff"></div>
<div class="t" style="left:901px;top:752.6px;font-size:13px">Page</div>
<div class="t" style="left:954.5px;top:752.6px;font-size:13px">1 of</div>
<div class="t" style="left:1005px;top:752.6px;font-size:13px">1</div>
<div class="a" style="left:0;top:768px;width:1026px;height:1px;background:#a8a8a8"></div>
<div class="a" style="left:0;top:769px;width:1026px;height:1px;background:#e4e4e4"></div>
<div class="a" style="left:0;top:770px;width:1026px;height:2px;background:#8e8e8e"></div>
<div class="a" style="left:1023px;top:522px;width:3px;height:224px;background:linear-gradient(90deg,#8a8a8a,#5a5a5a)"></div>
<div class="a" style="left:221px;top:744px;width:802px;height:2px;background:#909090"></div>
<div class="a" style="left:1025px;top:8px;width:1px;height:760px;background:#8a8a8a"></div>
<!-- red annotation overlays -->
<div class="rb" style="left:2px;top:29px;width:237px;height:30px;border-width:4px"></div>
<div class="rb" style="left:117px;top:61px;width:901px;height:34px;border-width:4px"></div>
<div class="rb" style="left:8px;top:100px;width:214px;height:286px;border-width:4px"></div>
<div class="rb" style="left:231px;top:102px;width:783px;height:389px;border-width:4px"></div>
<div class="rb" style="left:3px;top:489px;width:216px;height:258px;border-width:4px"></div>
<div class="rb" style="left:226px;top:500px;width:794px;height:250px;border-width:4px"></div>
<div class="cn" style="left:270px;top:34px">菜单栏</div>
<div class="cn" style="left:651.5px;top:34px">工具栏</div>
<div class="cn" style="left:61px;top:358px">绘图结构树</div>
<div class="cn" style="left:418px;top:330.5px">绘图区</div>
<div class="cn" style="left:35px;top:548.6px">显示设置工具</div>
<div class="cn" style="left:509px;top:644px">仿真结果筛选区域</div>
<!-- window frame -->
<div class="a" style="left:0;top:0;width:1026px;height:770px;border:1px solid #9c9c9c;border-bottom:0;border-radius:8px 8px 0 0;box-shadow:0 0 0 12px #c4c4c4;pointer-events:none"></div>
<div class="a" style="left:0;top:770px;width:1026px;height:2px;background:#8e8e8e"></div>
</body></html>
